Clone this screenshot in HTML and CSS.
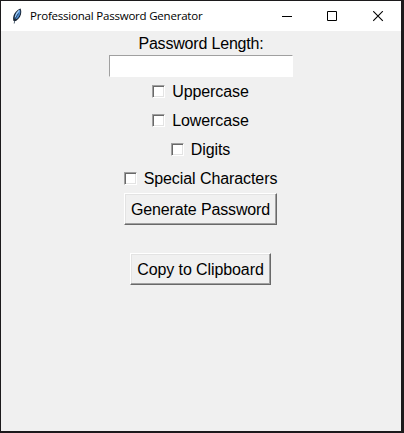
FILE: index.html
```
<!DOCTYPE html>
<html lang="en">
<head>
<meta charset="utf-8">
<title>Professional Password Generator</title>
<link rel="stylesheet" href="styles.css">
</head>
<body>
<div class="window">
  <header class="titlebar">
    <svg class="feather" width="10" height="16" viewBox="0 0 10 16">
      <path d="M1.500 13C0 8 3 3 8.500 .5C10.500 5 8.500 10 4 13Z" fill="#17212e"/>
      <path d="M2.500 10.500C2.500 6 5 3.500 8 1.500C9 5 7.500 9 4.500 11Z" fill="#4c8bd0"/>
      <path d="M3.500 9C4 6 5.500 4 7.200 2.500" fill="none" stroke="#a9d0f5" stroke-width="1.200"/>
      <path d="M2.200 15.500C2.600 12 4 8.500 6.500 5.500" fill="none" stroke="#26384e" stroke-width=".8"/>
    </svg>
    <h1 class="title">Professional Password Generator</h1>
    <div class="controls">
      <svg width="11" height="11" viewBox="0 0 11 11"><path d="M1 5.500H11" stroke="#000"/></svg>
      <svg width="11" height="11" viewBox="0 0 11 11"><path d="M.5 .5H9.500V9.500H.5Z" fill="none" stroke="#000"/></svg>
      <svg width="11" height="11" viewBox="0 0 11 11"><path d="M.2 .2L9.800 9.800M9.800 .2L.2 9.800" stroke="#000" stroke-width="1.100"/></svg>
    </div>
  </header>
  <main class="form">
    <label class="label" for="length">Password Length:</label>
    <input class="entry" id="length" type="text">
    <label class="check"><input type="checkbox"><span>Uppercase</span></label>
    <label class="check"><input type="checkbox"><span>Lowercase</span></label>
    <label class="check"><input type="checkbox"><span>Digits</span></label>
    <label class="check"><input type="checkbox"><span>Special Characters</span></label>
    <button class="button generate">Generate Password</button>
    <button class="button copy">Copy to Clipboard</button>
  </main>
</div>
</body>
</html>
```
FILE: styles.css
```
* { box-sizing: border-box; }
body {
  margin: 0;
  height: 433px;
  overflow: hidden;
  background: #1c1a1c;
  padding: 1px 3px 2px 1px;
  font: 16px/24px "Liberation Sans", Arial, sans-serif;
  letter-spacing: -0.14px;
  color: #000;
}
.window {
  height: 430px;
  background: #f0f0f0;
  display: flex;
  flex-direction: column;
}
.titlebar {
  height: 30px;
  flex: none;
  background: #fff;
  display: flex;
  align-items: center;
  padding-left: 11px;
}
.feather { display: block; flex: none; margin-top: -1px; }
.title {
  margin: 0 0 0 8px;
  font: 400 11.5px/16px "Open Sans", "Noto Sans", sans-serif;
  letter-spacing: -0.21px;
  white-space: nowrap;
}
.controls {
  margin-left: auto;
  margin-right: 17px;
  display: flex;
  gap: 35px;
}
.controls svg { display: block; }
.form {
  display: flex;
  flex-direction: column;
  align-items: center;
}
.label { height: 24px; line-height: 25px; letter-spacing: -0.18px; }
.entry {
  width: 184px;
  height: 22px;
  padding: 0 3px;
  border: 1px solid #fff;
  border-top-color: #a0a0a0;
  border-left-color: #a0a0a0;
  background: #fff;
  font: inherit;
}
.check {
  height: 29px;
  display: flex;
  align-items: center;
  gap: 7px;
  margin-right: 1px;
  letter-spacing: -0.08px;
}
.check input {
  appearance: none;
  width: 13px;
  height: 13px;
  margin: 0;
  border: 1px solid #fff;
  border-top-color: #a0a0a0;
  border-left-color: #a0a0a0;
  background: #fff;
  box-shadow: inset 1px 1px #696969, inset -1px -1px #e3e3e3;
}
.button {
  height: 32px;
  padding: 1px 0 0;
  margin-right: 1px;
  border: 1px solid #696969;
  border-top-color: #fff;
  border-left-color: #fff;
  background: #f0f0f0;
  box-shadow: inset -1px -1px #a0a0a0, inset 1px 1px #e3e3e3;
  font: inherit;
  letter-spacing: inherit;
  color: #000;
  white-space: nowrap;
}
.generate { width: 153px; }
.copy { width: 141px; margin-top: 28px; letter-spacing: -0.1px; }
```
